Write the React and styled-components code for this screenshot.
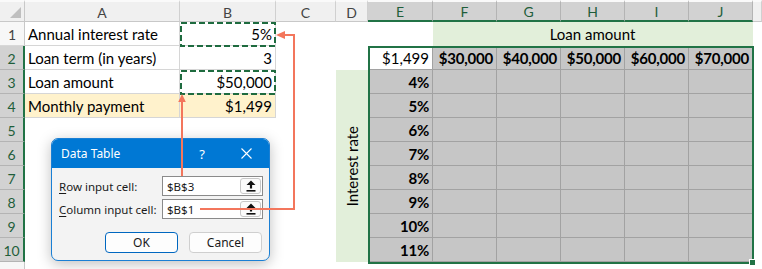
import React from "react";
import styled, { createGlobalStyle } from "styled-components";

const GREEN = "#217346";
const ARROW = "#f3765c";

const cols = ["A", "B", "C", "D", "E", "F", "G", "H", "I", "J"];
const selectedCols = "EFGHIJ";
const inputs = [
  ["Annual interest rate", "5%"],
  ["Loan term (in years)", "3"],
  ["Loan amount", "$50,000"],
  ["Monthly payment", "$1,499"],
];
const amounts = ["$30,000", "$40,000", "$50,000", "$60,000", "$70,000"];
const rates = ["4%", "5%", "6%", "7%", "8%", "9%", "10%", "11%"];

const GlobalStyle = createGlobalStyle`
  * { box-sizing: border-box; }
  body {
    margin: 0;
    background: #fff;
    overflow: hidden;
  }
`;

function App() {
  return (
    <Page>
      <GlobalStyle />
      <Sheet>
        <Corner>
          <CornerMark />
        </Corner>
        {cols.map((c) => (
          <ColHead key={c} $sel={selectedCols.includes(c)}>
            {c}
          </ColHead>
        ))}
        <ColHead />

        {Array.from({ length: 11 }, (_, i) => {
          const n = i + 1;
          const inTable = n >= 2 && n <= 10;
          const rateRow = n >= 3 && n <= 10;
          const input = inputs[i];
          const yellow = n === 4;

          return (
            <React.Fragment key={n}>
              {/* row 11 is only a sliver at the bottom edge */}
              <RowHead $sel={inTable}>{n <= 10 ? n : ""}</RowHead>
              <Cell $border={input ? "light" : null} $fill={yellow ? "yellow" : null}>
                {input && input[0]}
              </Cell>
              <Cell
                $align="right"
                $border={input ? "light" : null}
                $fill={yellow ? "yellow" : null}
              >
                {input && input[1]}
              </Cell>
              <Cell />
              {n === 3 && (
                <MergedSide>
                  <SideLabel>Interest rate</SideLabel>
                </MergedSide>
              )}
              {(n <= 2 || n > 10) && <Cell />}

              {n === 1 && <Cell />}
              {n === 1 && <MergedTop>Loan amount</MergedTop>}

              {n === 2 && (
                <>
                  <Cell $align="right" $border="dark">
                    $1,499
                  </Cell>
                  {amounts.map((a) => (
                    <Cell key={a} $align="right" $border="dark" $fill="shade" $bold>
                      {a}
                    </Cell>
                  ))}
                </>
              )}

              {rateRow && (
                <>
                  <Cell $align="right" $border="dark" $fill="shade" $bold>
                    {rates[n - 3]}
                  </Cell>
                  {amounts.map((a) => (
                    <Cell key={a} $border="dark" $fill="shade" />
                  ))}
                </>
              )}

              {n === 11 && cols.slice(4).map((c) => <Cell key={c} />)}
              <Cell />
            </React.Fragment>
          );
        })}
      </Sheet>

      <Selection>
        <FillHandle />
      </Selection>

      <Dialog>
        <TitleBar>
          <Title>Data Table</Title>
          <TitleButton $w={30}>?</TitleButton>
          <TitleButton $w={46}>
            <svg width="11" height="11" viewBox="0 0 11 11">
              <path d="M0.5 0.5 L10.5 10.5 M10.5 0.5 L0.5 10.5" stroke="#fff" strokeWidth="1.1" />
            </svg>
          </TitleButton>
        </TitleBar>
        <DialogBody>
          <Field>
            <Label>
              <u>R</u>ow input cell:
            </Label>
            <Input>
              <span>$B$3</span>
              <PickButton>
                <UploadIcon />
              </PickButton>
            </Input>
          </Field>
          <Field>
            <Label>
              <u>C</u>olumn input cell:
            </Label>
            <Input>
              <span>$B$1</span>
              <PickButton>
                <UploadIcon />
              </PickButton>
            </Input>
          </Field>
          <Buttons>
            <Button $primary>OK</Button>
            <Button>Cancel</Button>
          </Buttons>
        </DialogBody>
      </Dialog>

      <Overlay width="762" height="269" viewBox="0 0 762 269">
        <rect x="181" y="23" width="94" height="23" fill="none" stroke="#1e6b3f" strokeWidth="2" strokeDasharray="6 3" />
        <rect x="181" y="71" width="94" height="23" fill="none" stroke="#1e6b3f" strokeWidth="2" strokeDasharray="6 3" />

        <line x1="182" y1="176" x2="182" y2="101" stroke={ARROW} strokeWidth="2" />
        <polygon points="178.2,102 185.8,102 182,94" fill={ARROW} />

        <polyline points="200,209 294,209 294,35 284,35" fill="none" stroke={ARROW} strokeWidth="2" />
        <polygon points="285,31 285,39 276,35" fill={ARROW} />
      </Overlay>
    </Page>
  );
}

function UploadIcon() {
  return (
    <svg width="10" height="12" viewBox="0 0 10 12">
      <polygon points="5,0.5 9.5,5 6.1,5 6.1,8.6 3.9,8.6 3.9,5 0.5,5" fill="#111" />
      <rect x="0.5" y="10" width="9" height="1.6" fill="#111" />
    </svg>
  );
}

export default App;

const Page = styled.div`
  position: relative;
  width: 762px;
  height: 269px;
  overflow: hidden;
  background: #fff;
  font-family: Lato, "Liberation Sans", sans-serif;
  color: #000;
`;

const Sheet = styled.div`
  display: grid;
  grid-template-columns: 25px 155px 96px 60px 32px 65px repeat(5, 64px) 1fr;
  grid-template-rows: 22px repeat(11, 24px);
`;

const Corner = styled.div`
  position: relative;
  background: #f0f0f0;
  border-right: 1px solid #c8c8c8;
  border-bottom: 1px solid #c8c8c8;
  border-top: 2px solid #fafafa;
`;

const CornerMark = styled.div`
  position: absolute;
  right: 3px;
  bottom: 3px;
  width: 0;
  height: 0;
  border-left: 11px solid transparent;
  border-bottom: 11px solid #bfbfbf;
`;

const ColHead = styled.div`
  display: flex;
  align-items: center;
  justify-content: center;
  font-size: 14px;
  padding-top: 1px;
  background: ${(p) => (p.$sel ? "#d2d2d2" : "#f0f0f0")};
  color: ${(p) => (p.$sel ? "#1f5e3a" : "#444")};
  border-top: 2px solid #fafafa;
  border-right: 1px solid ${(p) => (p.$sel ? "#b4b4b4" : "#d0d0d0")};
  border-bottom: ${(p) => (p.$sel ? `2px solid ${GREEN}` : "1px solid #c8c8c8")};
`;

const RowHead = styled.div`
  display: flex;
  align-items: center;
  justify-content: center;
  padding-top: 2px;
  font-size: 14px;
  background: ${(p) => (p.$sel ? "#d2d2d2" : "#f7f7f7")};
  color: ${(p) => (p.$sel ? "#1f5e3a" : "#444")};
  border-right: ${(p) => (p.$sel ? `2px solid ${GREEN}` : "1px solid #c8c8c8")};
  border-bottom: 1px solid ${(p) => (p.$sel ? "#b4b4b4" : "#d8d8d8")};
`;

const fills = {
  yellow: "#fff2cc",
  shade: "#c6c6c6",
  green: "#e2efda",
};

const borders = {
  light: "#d6d6d6",
  dark: "#a2a2a2",
};

const Cell = styled.div`
  display: flex;
  align-items: flex-end;
  justify-content: ${(p) =>
    p.$align === "right" ? "flex-end" : p.$align === "center" ? "center" : "flex-start"};
  padding: 0 3px 1px 3px;
  font-size: 15px;
  line-height: 19px;
  font-weight: ${(p) => (p.$bold ? 700 : 400)};
  letter-spacing: ${(p) => (p.$bold ? "-0.2px" : "0")};
  white-space: nowrap;
  overflow: hidden;
  background: ${(p) => (p.$fill ? fills[p.$fill] : "transparent")};
  border-right: 1px solid ${(p) => (p.$border ? borders[p.$border] : "transparent")};
  border-bottom: 1px solid ${(p) => (p.$border ? borders[p.$border] : "transparent")};
`;

const MergedTop = styled(Cell)`
  grid-column: span 5;
  justify-content: center;
  background: ${fills.green};
`;

const MergedSide = styled.div`
  grid-row: span 8;
  display: flex;
  align-items: center;
  justify-content: center;
  background: ${fills.green};
`;

const SideLabel = styled.span`
  writing-mode: vertical-rl;
  transform: rotate(180deg);
  font-size: 15px;
  white-space: nowrap;
`;

const Selection = styled.div`
  position: absolute;
  left: 368px;
  top: 46px;
  width: 386px;
  height: 218px;
  border: 2px solid ${GREEN};
  pointer-events: none;
`;

const FillHandle = styled.div`
  position: absolute;
  right: -4px;
  bottom: -4px;
  width: 7px;
  height: 7px;
  background: ${GREEN};
  border: 1px solid #fff;
`;

const Dialog = styled.div`
  position: absolute;
  left: 51px;
  top: 138px;
  width: 219px;
  height: 123px;
  display: flex;
  flex-direction: column;
  background: #f3f3f3;
  border: 1px solid #1a7fd4;
  border-radius: 7px;
  overflow: hidden;
  box-shadow: 0 3px 14px rgba(0, 0, 0, 0.25);
  font-family: "Noto Sans", "Open Sans", sans-serif;
  font-size: 11.5px;
  color: #1a1a1a;
`;

const TitleBar = styled.div`
  height: 29px;
  display: flex;
  align-items: center;
  padding-left: 9px;
  background: #0078d4;
  color: #fff;
`;

const Title = styled.div`
  flex: 1;
  font-size: 12px;
`;

const TitleButton = styled.div`
  width: ${(p) => p.$w}px;
  height: 100%;
  display: flex;
  align-items: center;
  justify-content: center;
  font-size: 13px;
  margin-left: 6px;
`;

const DialogBody = styled.div`
  padding: 8px 6px 0 7px;
  display: flex;
  flex-direction: column;
  gap: 3px;
`;

const Field = styled.div`
  display: grid;
  grid-template-columns: 103px 101px;
  align-items: center;
`;

const Label = styled.div`
  white-space: nowrap;

  u {
    text-underline-offset: 2px;
  }
`;

const Input = styled.div`
  height: 20px;
  display: flex;
  align-items: center;
  justify-content: space-between;
  padding: 0 1px 0 4px;
  background: #fff;
  border: 1px solid #8a8a8a;
  font-size: 11.5px;
`;

const PickButton = styled.div`
  width: 21px;
  height: 16px;
  display: flex;
  align-items: center;
  justify-content: center;
  background: #fbfbfb;
  border: 1px solid #c8c8c8;
  border-radius: 3px;
`;

const Buttons = styled.div`
  display: flex;
  justify-content: flex-end;
  gap: 11px;
  margin-top: 10px;
  padding-right: 1px;
`;

const Button = styled.div`
  width: 73px;
  height: 21px;
  display: flex;
  align-items: center;
  justify-content: center;
  background: #fdfdfd;
  border: 1px solid ${(p) => (p.$primary ? "#0067c0" : "#cfcfcf")};
  border-radius: 4px;
  font-size: 12px;
`;

const Overlay = styled.svg`
  position: absolute;
  left: 0;
  top: 0;
  pointer-events: none;
`;
